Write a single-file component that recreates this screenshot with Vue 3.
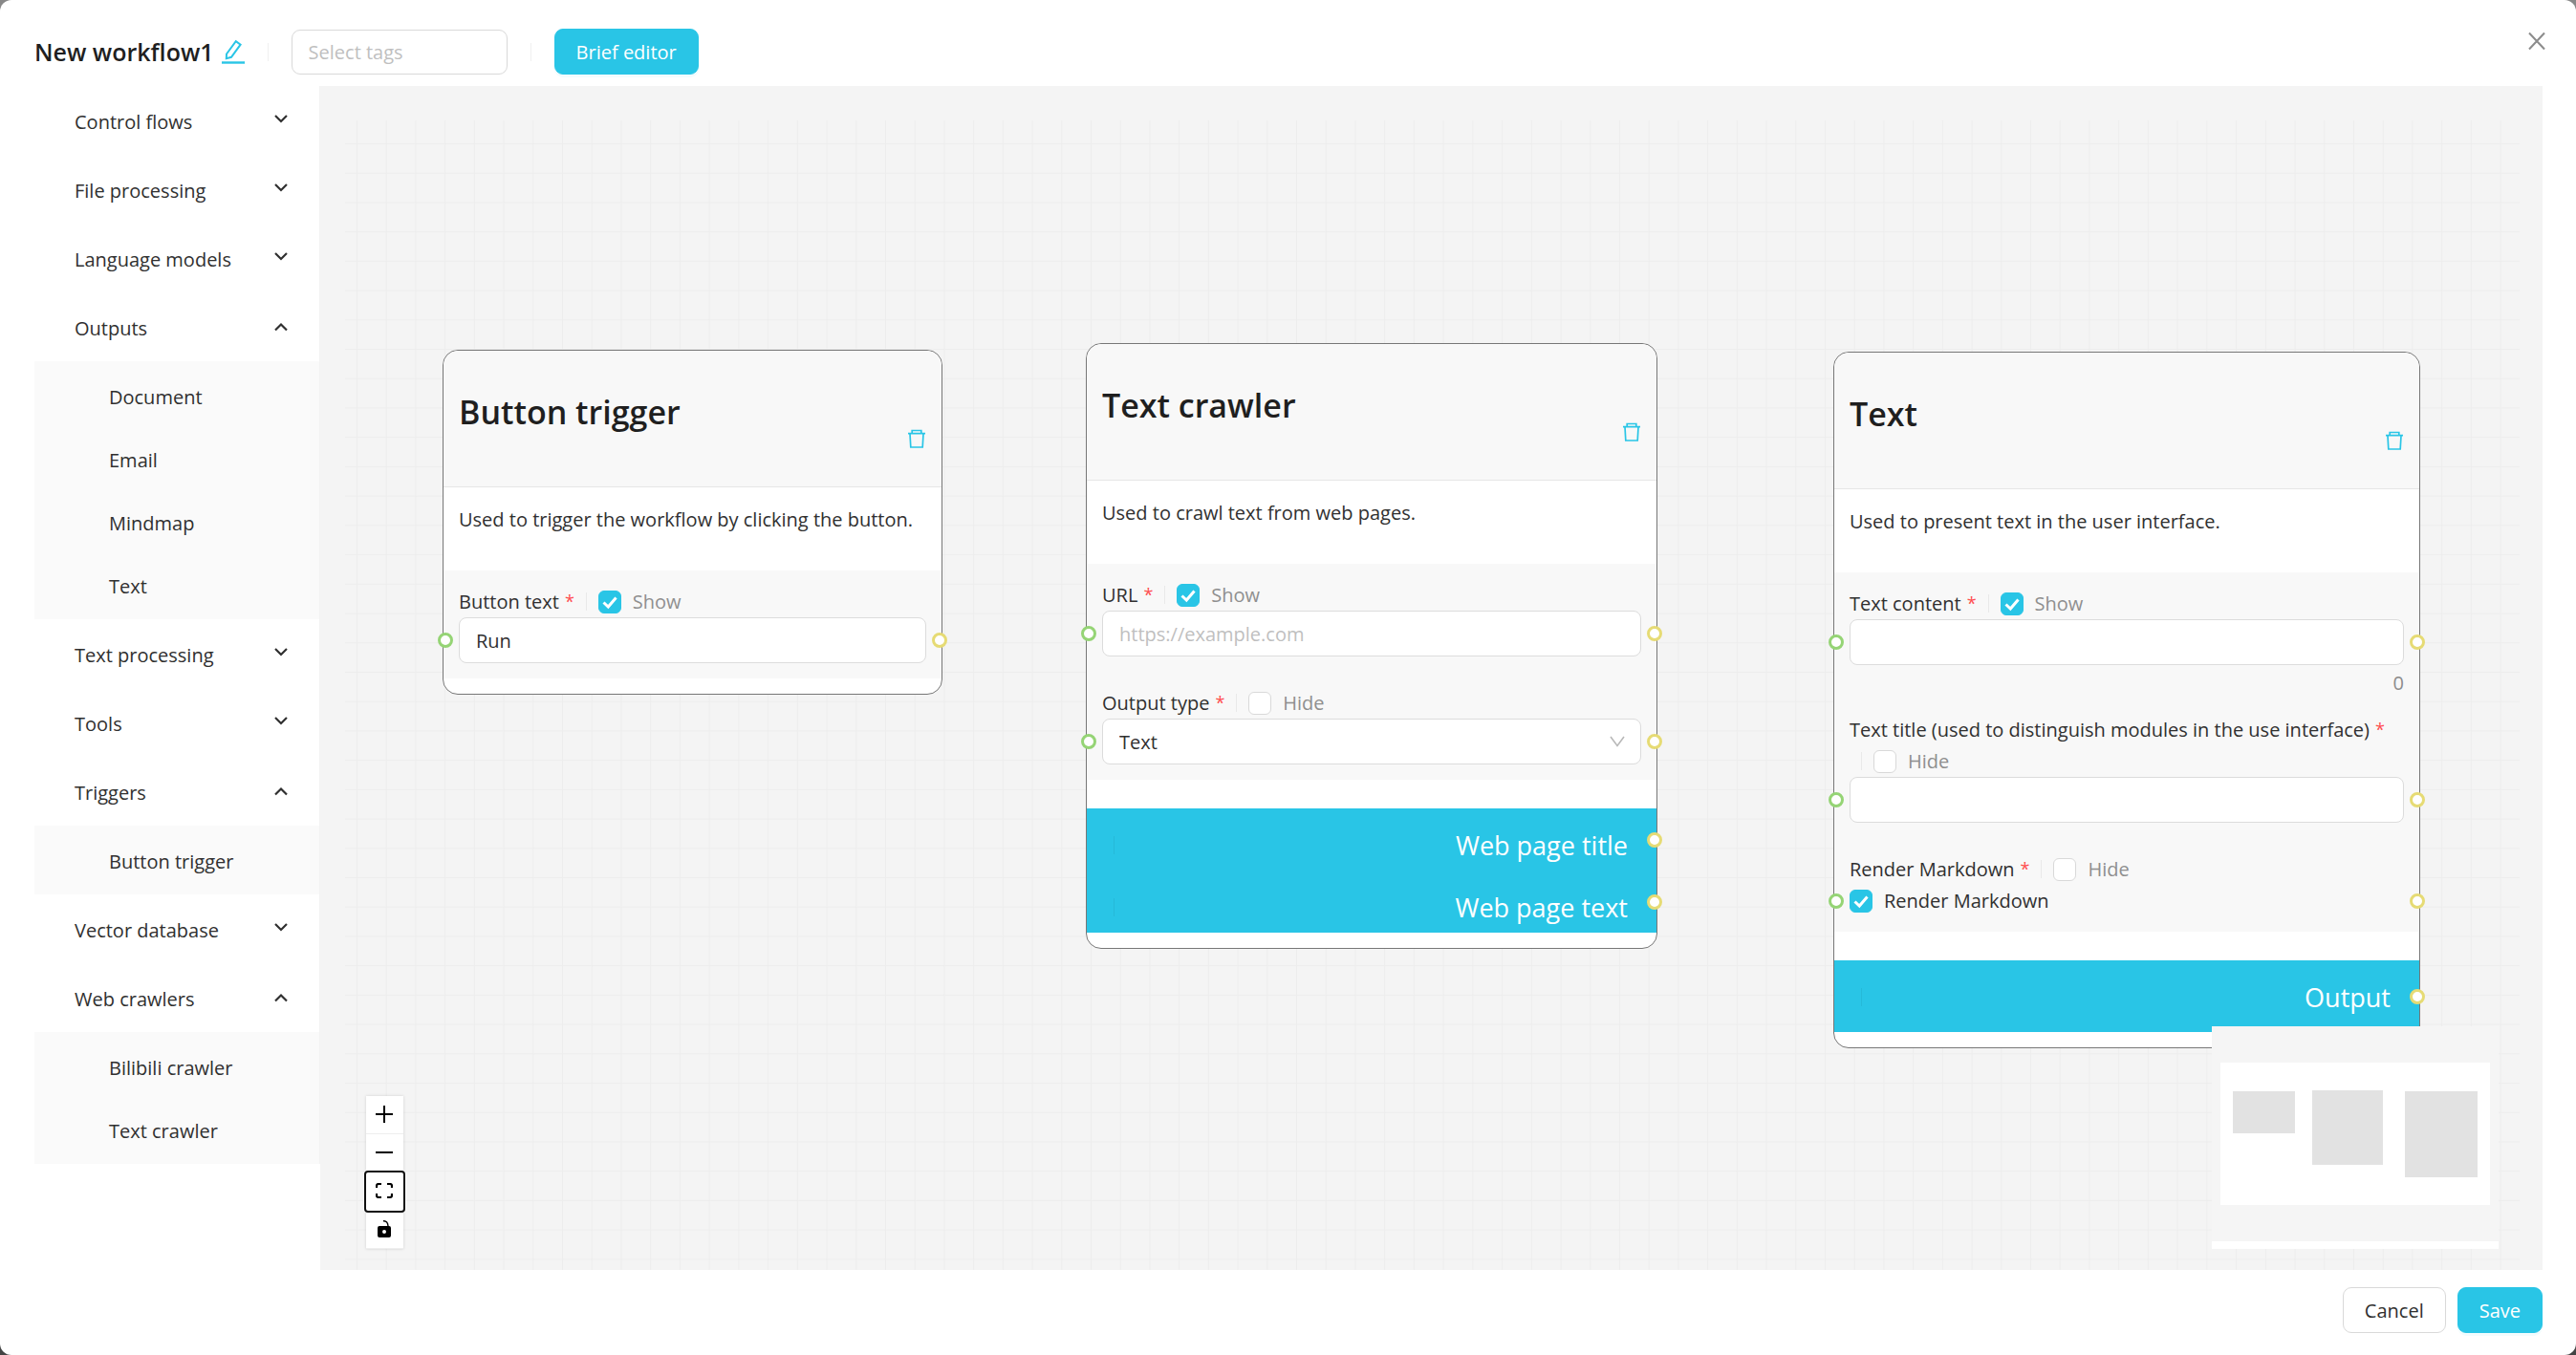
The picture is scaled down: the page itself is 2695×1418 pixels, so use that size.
<script setup>
import { ref, reactive } from 'vue'

const workflowName = ref('New workflow1')

const menu = reactive([
  { name: 'Control flows', open: false, items: [] },
  { name: 'File processing', open: false, items: [] },
  { name: 'Language models', open: false, items: [] },
  { name: 'Outputs', open: true, items: ['Document', 'Email', 'Mindmap', 'Text'] },
  { name: 'Text processing', open: false, items: [] },
  { name: 'Tools', open: false, items: [] },
  { name: 'Triggers', open: true, items: ['Button trigger'] },
  { name: 'Vector database', open: false, items: [] },
  { name: 'Web crawlers', open: true, items: ['Bilibili crawler', 'Text crawler'] },
])

const nodes = reactive([
  {
    id: 'button-trigger',
    x: 102, y: 240, width: 523,
    title: 'Button trigger',
    description: 'Used to trigger the workflow by clicking the button.',
    fields: [{ key: 'text', label: 'Button text', type: 'input', show: true, value: 'Run', placeholder: '' }],
    outputs: [],
  },
  {
    id: 'text-crawler',
    x: 775, y: 233, width: 598,
    title: 'Text crawler',
    description: 'Used to crawl text from web pages.',
    fields: [
      { key: 'url', label: 'URL', type: 'input', show: true, value: '', placeholder: 'https://example.com' },
      { key: 'output-type', label: 'Output type', type: 'select', show: false, value: 'Text', options: ['Text', 'Title'] },
    ],
    outputs: ['Web page title', 'Web page text'],
  },
  {
    id: 'text',
    x: 1557, y: 242, width: 614,
    title: 'Text',
    description: 'Used to present text in the user interface.',
    fields: [
      { key: 'content', label: 'Text content', type: 'textarea', show: true, value: '' },
      { key: 'title', label: 'Text title (used to distinguish modules in the use interface)', type: 'input', show: false, value: '', placeholder: '' },
      { key: 'markdown', label: 'Render Markdown', type: 'checkbox', show: false, value: true },
    ],
    outputs: ['Output'],
  },
])

/* Background grid: 20 units per cell at the current zoom */
const zoom = 1.536
const cell = 20 * zoom
</script>

<template>
  <div class="dialog" role="dialog" aria-label="Workflow editor">
    <header class="header">
      <div class="name">
        <h1>{{ workflowName }}</h1>
        <button class="icon-btn" type="button" aria-label="Rename workflow">
          <svg width="24" height="26" viewBox="0 0 24 26" fill="none" stroke="currentColor" stroke-width="2">
            <path d="M5 15.500 14.800 2.200 19.600 5.700 10 18.800 4.800 20.200Z" />
            <path d="M0 24.500H24" stroke-width="2.400" />
          </svg>
        </button>
      </div>
      <span class="divider"></span>
      <select class="tags" aria-label="Select tags">
        <option value="">Select tags</option>
      </select>
      <span class="divider"></span>
      <button class="btn primary" type="button">Brief editor</button>
      <button class="close" type="button" aria-label="Close">
        <svg width="18" height="20" viewBox="0 0 18 20" fill="none" stroke="currentColor" stroke-width="2">
          <path d="M1 1.500 17 18.500M17 1.500 1 18.500" />
        </svg>
      </button>
    </header>

    <main class="body">
      <nav class="sidebar">
        <ul class="menu">
          <li v-for="group in menu" :key="group.name">
            <button class="group" type="button" :aria-expanded="group.open" @click="group.open = !group.open">
              <span>{{ group.name }}</span>
              <svg width="14" height="16" viewBox="0 0 14 16" fill="none" stroke="currentColor" stroke-width="2.200">
                <path v-if="group.open" d="M1 10.500 7 4.500 13 10.500" />
                <path v-else d="M1 2 7 8 13 2" />
              </svg>
            </button>
            <ul v-if="group.open" class="submenu">
              <li v-for="item in group.items" :key="item">
                <a href="#">{{ item }}</a>
              </li>
            </ul>
          </li>
        </ul>
      </nav>

      <section class="canvas">
        <div class="flow">
          <svg class="grid" width="100%" height="100%" aria-hidden="true">
            <defs>
              <pattern id="cells" x="12" y="24" :width="cell" :height="cell" patternUnits="userSpaceOnUse">
                <path :d="`M0 .5H${cell}M.5 0V${cell}`" stroke="#ededed" stroke-width="1" />
              </pattern>
            </defs>
            <rect width="100%" height="100%" fill="url(#cells)" />
          </svg>

          <article
            v-for="node in nodes"
            :key="node.id"
            class="node"
            :style="{ left: node.x + 'px', top: node.y + 'px', width: node.width + 'px' }"
          >
            <div class="node-head">
              <h2>{{ node.title }}</h2>
              <button class="icon-btn delete" type="button" aria-label="Delete node">
                <svg width="20" height="20" viewBox="0 0 20 20" fill="none" stroke="currentColor" stroke-width="1.700">
                  <path d="M1 4.700H19M5.200 4.500V1.500H14.800V4.500M3 5 3.800 19H16.200L17 5" />
                </svg>
              </button>
            </div>
            <p class="description">{{ node.description }}</p>

            <div class="fields">
              <div v-for="field in node.fields" :key="field.key" class="field">
                <div class="field-label">
                  <label :for="`${node.id}-${field.key}`">{{ field.label }}</label>
                  <span class="required">*</span>
                  <span class="toggle">
                    <span class="divider"></span>
                    <label class="check muted">
                      <input v-model="field.show" type="checkbox" />
                      <span>{{ field.show ? 'Show' : 'Hide' }}</span>
                    </label>
                  </span>
                </div>

                <div class="control">
                  <textarea
                    v-if="field.type === 'textarea'"
                    :id="`${node.id}-${field.key}`"
                    v-model="field.value"
                    class="box"
                    rows="1"
                  ></textarea>
                  <template v-else-if="field.type === 'select'">
                    <select :id="`${node.id}-${field.key}`" v-model="field.value" class="box">
                      <option v-for="option in field.options" :key="option">{{ option }}</option>
                    </select>
                    <svg class="caret" width="16" height="12" viewBox="0 0 16 12" fill="none" stroke="currentColor" stroke-width="1.600">
                      <path d="M1 1 8 10.500 15 1" />
                    </svg>
                  </template>
                  <label v-else-if="field.type === 'checkbox'" class="check">
                    <input :id="`${node.id}-${field.key}`" v-model="field.value" type="checkbox" />
                    <span>{{ field.label }}</span>
                  </label>
                  <input
                    v-else
                    :id="`${node.id}-${field.key}`"
                    v-model="field.value"
                    class="box"
                    type="text"
                    :placeholder="field.placeholder"
                  />
                  <i class="handle target"></i>
                  <i class="handle source"></i>
                </div>
                <div v-if="field.type === 'textarea'" class="count">{{ field.value.length }}</div>
              </div>
            </div>

            <div v-if="node.outputs.length" class="outputs" :class="{ single: node.outputs.length === 1 }">
              <div v-for="output in node.outputs" :key="output" class="output">
                <span class="divider"></span>
                <span>{{ output }}</span>
                <i class="handle source"></i>
              </div>
            </div>
          </article>
        </div>

        <div class="controls">
          <button type="button" aria-label="Zoom in">
            <svg width="18" height="18" viewBox="0 0 18 18"><path d="M8 0h2v8h8v2h-8v8H8v-8H0V8h8z" /></svg>
          </button>
          <button type="button" aria-label="Zoom out">
            <svg width="18" height="18" viewBox="0 0 18 18"><path d="M0 8h18v2H0z" /></svg>
          </button>
          <button type="button" class="focused" aria-label="Fit view">
            <svg width="18" height="16" viewBox="0 0 18 16" fill="none" stroke="#000" stroke-width="2.200">
              <path d="M1 5V3Q1 1 3 1H6M12 1H15Q17 1 17 3V5M17 11V13Q17 15 15 15H12M6 15H3Q1 15 1 13V11" />
            </svg>
          </button>
          <button type="button" aria-label="Lock canvas">
            <svg width="14" height="18" viewBox="0 0 14 18">
              <path d="M6 .7Q10.800 .5 11 6" fill="none" stroke="#000" stroke-width="1.400" />
              <path fill-rule="evenodd" d="M2 6H12Q14 6 14 8V16Q14 18 12 18H2Q0 18 0 16V8Q0 6 2 6ZM7 10A2 2 0 1 0 7 14A2 2 0 1 0 7 10Z" />
            </svg>
          </button>
        </div>

        <div class="minimap">
          <svg width="300" height="225" viewBox="0 0 300 225">
            <rect width="300" height="225" fill="#f5f5f5" />
            <rect x="9" y="38" width="282" height="149" fill="#fff" />
            <g fill="#e2e2e2">
              <rect x="22" y="68" width="65" height="44" />
              <rect x="105" y="67" width="74" height="78" />
              <rect x="202" y="68" width="76" height="90" />
            </g>
          </svg>
        </div>
      </section>
    </main>

    <footer class="footer">
      <button class="btn" type="button">Cancel</button>
      <button class="btn primary" type="button">Save</button>
    </footer>
  </div>
</template>

<style>
html {
  background: linear-gradient(#888 50%, #444 50%);
}
body {
  margin: 0;
}
</style>

<style scoped>
.dialog,
.dialog * {
  box-sizing: border-box;
}
.dialog {
  --primary: #29c5e6;
  display: flex;
  flex-direction: column;
  min-height: 100vh;
  background: #fff;
  border-radius: 12px;
  color: #303030;
  font-family: 'Open Sans', 'Noto Sans', sans-serif;
  font-size: 20px;
  line-height: 33px;
}
h1,
h2,
p,
ul {
  margin: 0;
  padding: 0;
}
ul {
  list-style: none;
}
button,
input,
select,
textarea {
  font: inherit;
  color: inherit;
}
button {
  cursor: pointer;
}
svg {
  display: block;
}

.header {
  display: flex;
  flex: none;
  align-items: center;
  gap: 24px;
  height: 90px;
  padding: 18px 26px 0 36px;
}
.name {
  display: flex;
  align-items: center;
  gap: 8px;
  height: 48px;
}
h1,
h2 {
  color: #1f1f1f;
  font-weight: 600;
}
h1 {
  font-size: 25px;
}
.icon-btn {
  padding: 0;
  border: 0;
  background: none;
  color: var(--primary);
}
.divider {
  flex: none;
  width: 1px;
  height: 19px;
  background: rgba(5, 5, 5, 0.06);
}
.tags {
  width: 226px;
  height: 47px;
  padding: 0 17px;
  border: 1px solid #d9d9d9;
  border-radius: 9px;
  background: #fff;
  color: #bfbfbf;
  appearance: none;
}
.btn {
  height: 48px;
  padding: 0 22px;
  border: 1px solid #d9d9d9;
  border-radius: 9px;
  background: #fff;
}
.btn.primary {
  border-color: var(--primary);
  background: var(--primary);
  color: #fff;
  box-shadow: 0 3px 0 rgba(41, 197, 230, 0.06);
}
.close {
  align-self: flex-start;
  margin-top: 9px;
  margin-left: auto;
  padding: 6px;
  border: 0;
  background: none;
  color: #8c8c8c;
}

.body {
  display: flex;
  flex: 1;
  padding: 0 35px 0 36px;
}
.sidebar {
  flex: none;
  width: 299px;
}
.menu {
  border-right: 1px solid #f3f3f3;
}
.group {
  display: flex;
  align-items: center;
  justify-content: space-between;
  width: 100%;
  height: 72px;
  padding: 2px 33px 0 42px;
  border: 0;
  background: none;
  text-align: left;
}
.submenu {
  padding: 3px 0;
  background: #fafafa;
}
.submenu a {
  display: block;
  padding: 18px 24px 15px 78px;
  color: inherit;
  text-decoration: none;
}

.canvas {
  position: relative;
  flex: 1;
  min-width: 0;
  padding: 36px 24px 0 26px;
  background: #f4f4f4;
}
.flow {
  position: relative;
  height: 100%;
}
.grid {
  position: absolute;
  inset: 0;
}
.node {
  position: absolute;
  padding-bottom: 16px;
  border: 1px solid #777;
  border-radius: 16px;
  background: #fff;
}
.node-head {
  display: flex;
  justify-content: space-between;
  height: 143px;
  padding: 40px 16px 34px;
  border-bottom: 1px solid #e6e6e6;
  border-radius: 16px 16px 0 0;
  background: #f8f8f8;
}
h2 {
  font-size: 34px;
  line-height: 48px;
}
.delete {
  align-self: flex-end;
  height: 32px;
}
.description {
  padding: 17px 16px 37px;
  white-space: nowrap;
}
.fields {
  background: #f8f8f8;
}
.field {
  padding: 16px;
}
.field-label {
  display: flex;
  flex-wrap: wrap;
  align-items: center;
}
.required {
  margin-left: 6px;
  color: #ff4d4f;
  font-size: 18px;
}
.toggle {
  display: flex;
  align-items: center;
  height: 33px;
}
.toggle .divider {
  margin: 0 12px;
}
.check {
  display: flex;
  align-items: center;
  gap: 12px;
  height: 33px;
}
.muted {
  color: #8f8f8f;
}
.check input {
  flex: none;
  width: 24px;
  height: 24px;
  margin: 0;
  border: 1px solid #d9d9d9;
  border-radius: 6px;
  background: #fff;
  appearance: none;
}
.check input:checked {
  border-color: var(--primary);
  background: var(--primary)
    url("data:image/svg+xml,%3Csvg xmlns='http://www.w3.org/2000/svg' viewBox='0 0 24 24'%3E%3Cpath d='M5.500 12.500 10.300 17 18.500 7.500' fill='none' stroke='white' stroke-width='3'/%3E%3C/svg%3E")
    center / 24px 24px no-repeat;
}
.control {
  position: relative;
}
.box {
  display: block;
  width: 100%;
  height: 48px;
  padding: 6px 17px;
  border: 1px solid #dcdcdc;
  border-radius: 8px;
  background: #fff;
  appearance: none;
  resize: none;
  overflow: hidden;
}
.box::placeholder {
  color: #bfbfbf;
}
.caret {
  position: absolute;
  top: 18px;
  right: 17px;
  color: #b8b8b8;
  pointer-events: none;
}
.count {
  height: 19px;
  line-height: 37px;
  text-align: right;
  color: #8c8c8c;
}
.handle {
  position: absolute;
  top: 50%;
  width: 16px;
  height: 16px;
  margin-top: -8px;
  border: 3px solid #e6db74;
  border-radius: 50%;
  background: #fff;
}
.target {
  left: -22px;
  border-color: #95d475;
}
.control .source {
  right: -22px;
}
.outputs {
  margin-top: 30px;
  background: var(--primary);
  color: #fff;
  font-size: 27px;
}
.output {
  position: relative;
  display: flex;
  align-items: center;
  justify-content: space-between;
  padding: 17px 30px 5px 28px;
  line-height: 43px;
}
.single .output {
  padding-bottom: 15px;
}
.output .source {
  right: -6px;
}

.controls {
  position: absolute;
  left: 48px;
  bottom: 22px;
  display: flex;
  flex-direction: column;
  background: #fff;
  box-shadow: 0 0 3px rgba(0, 0, 0, 0.15);
}
.controls button {
  display: flex;
  align-items: center;
  justify-content: center;
  width: 39px;
  height: 40px;
  padding: 0 1px 2px 0;
  border: 0;
  border-bottom: 1px solid #eee;
  background: #fff;
}
.controls .focused {
  border: 0;
  border-radius: 2px;
  outline: 2px solid #101010;
  box-shadow: 0 0 0 3px #fff;
  z-index: 1;
}
.minimap {
  position: absolute;
  right: 46px;
  bottom: 22px;
  padding-bottom: 8px;
  background: #fff;
}

.footer {
  display: flex;
  flex: none;
  justify-content: flex-end;
  gap: 12px;
  padding: 18px 35px 23px;
}
</style>
